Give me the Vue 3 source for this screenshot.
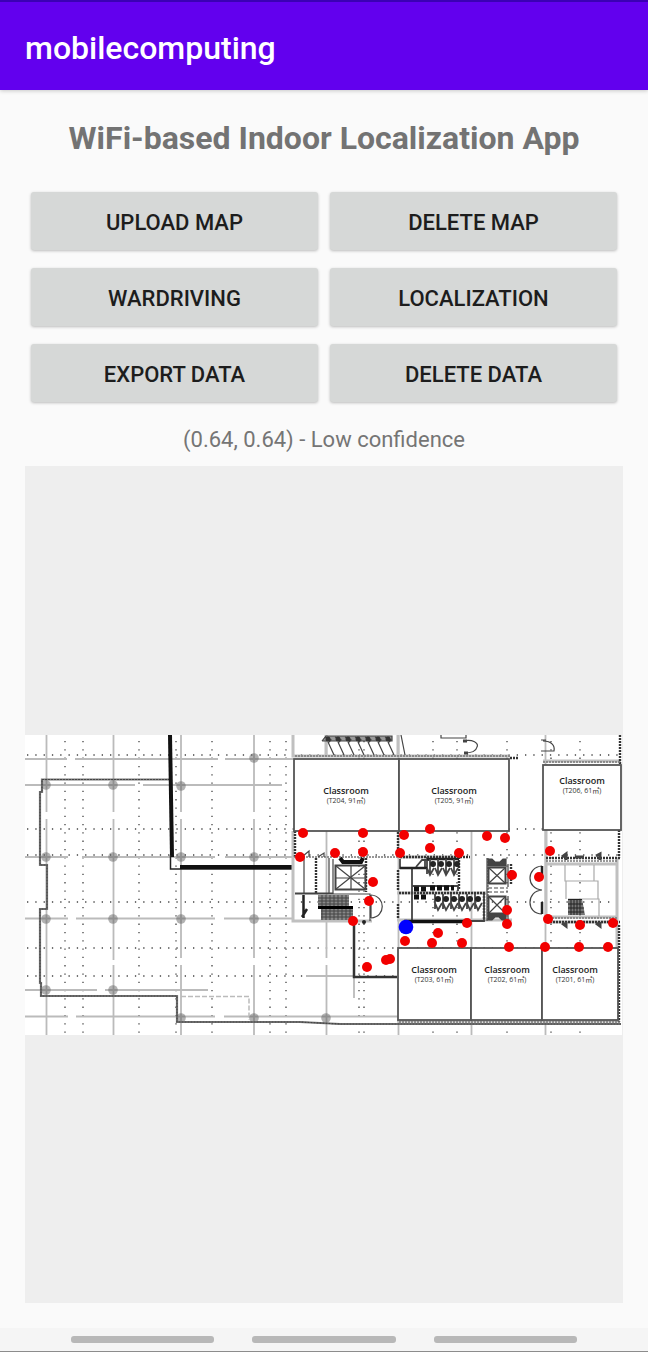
<script setup>
const actions = [
  'Upload map', 'Delete map',
  'Wardriving', 'Localization',
  'Export data', 'Delete data',
]

const rooms = [
  { id: 'T204', area: 91, x: 294, y: 759, w: 105, h: 72, tx: 346, ty: 794 },
  { id: 'T205', area: 91, x: 399, y: 759, w: 110, h: 72, tx: 454, ty: 794 },
  { id: 'T206', area: 61, x: 543, y: 765, w: 78, h: 65, tx: 582, ty: 784 },
  { id: 'T203', area: 61, x: 398, y: 948, w: 73, h: 72, tx: 434, ty: 973 },
  { id: 'T202', area: 61, x: 471, y: 948, w: 71, h: 72, tx: 507, ty: 973 },
  { id: 'T201', area: 61, x: 542, y: 948, w: 76, h: 72, tx: 575, ty: 973 },
]

const samples = [
  [303, 833], [300, 857], [335, 853], [363, 833], [363, 852], [404, 835],
  [430, 829], [430, 848], [400, 853], [459, 853], [487, 836], [505, 838],
  [550, 851], [373, 882], [369, 901], [353, 921], [512, 875], [539, 877],
  [507, 910], [507, 924], [467, 923], [438, 933], [432, 943], [462, 943],
  [405, 941], [386, 960], [390, 959], [367, 967], [509, 947], [545, 947],
  [579, 947], [608, 947], [548, 919], [580, 925], [613, 923],
]

const columns = [
  [46, 785], [113, 785], [181, 786], [254, 758],
  [46, 857], [113, 857], [181, 857], [254, 857],
  [46, 919], [113, 919], [181, 919], [254, 919],
  [46, 990], [113, 990], [181, 1018], [254, 1018], [326, 1018],
]

const dottedX = [65, 83, 139, 176, 212, 270, 286, 359, 364, 433, 457, 507, 551, 580]
const dottedY = [755, 829, 855, 902, 948, 976]
const deskX = [325, 335, 345, 355, 365, 375, 385]
const upperStalls = [430, 438, 446, 454]
const lowerStalls = [438, 446, 454, 462, 470, 478]
</script>

<template>
  <div class="screen">
    <header class="app-bar"><span>mobilecomputing</span></header>
    <main>
      <h1>WiFi-based Indoor Localization App</h1>
      <div class="actions">
        <button v-for="a in actions" :key="a" type="button">{{ a }}</button>
      </div>
      <p class="status">(0.64, 0.64) - Low confidence</p>
      <div class="map">
        <svg viewBox="25 735 598 300" role="img" aria-label="Floor map">
          <rect x="25" y="735" width="597" height="300" fill="#fff" />

          <!-- survey grid -->
          <g class="dots">
            <path v-for="x in dottedX" :key="'x' + x" :d="`M${x} 741V1035`" />
            <path v-for="y in dottedY" :key="'y' + y" :d="`M27 ${y}H622`" />
          </g>
          <g class="axis">
            <path d="M46.500 735V812M46.500 819V1035M113.500 735V812M113.500 819V960M113.500 965V1035M181 735V812M181 819V958M181 965V1035M254 735V812M254 819V958M254 965V1035" />
            <path d="M25 759H67M75 759H218M225 759H293M25 785H135M143 785H282M25 857H68M82 857H215M225 857H294M25 918.500H68M76 918.500H215M224 918.500H294M25 990H97M105 990H208M25 1016.500H68M76 1016.500H215M224 1016.500H398" />
            <path d="M326.500 735V755M326.500 831V958M326.500 965V1035M398.500 735V948M398.500 1020V1035M471.500 831V948M471.500 1020V1035M545.500 735V1035M306 976H354M354 977V998" />
          </g>
          <g class="axis-soft">
            <path d="M181 996.500H249V1020" stroke-dasharray="5 2" />
          </g>
          <circle v-for="([x, y], i) in columns" :key="'c' + i" :cx="x" :cy="y" r="4.800" fill="#666" opacity=".5" />

          <!-- outer walls -->
          <g class="wall">
            <path d="M170 779.500H42V792H40V865H47V909H40V983H41V996H177V1022H300L340 1024H621" />
          </g>
          <g class="wall-grain">
            <path d="M170 779.500H42V792H40V865H47V909H40V983H41V996H177V1022H300L340 1024H621" />
          </g>
          <path d="M170 735L172 857" class="heavy" />
          <path d="M170.500 855V869H294" fill="none" stroke="#222" stroke-width="1.500" />
          <path d="M180 867H294" class="heavy" />
          <path d="M354 921V977H397" fill="none" stroke="#333" stroke-width="2.500" />

          <!-- wall bands -->
          <g class="band">
            <path d="M293 735V756H510M293 831V921H372M326 735V756M398 735V756M397 920H512M397 893H486M397 857H460M543 761H621M546 764V921M546 864H617M546 917H617M546 922H617M617 858V1020M397 1021H620" />
          </g>
          <g class="hatch">
            <path d="M295 831V857M316 858V893M366 858V892M398 832V856M398 870V890M398 904V918M400 857H470M459 857V889M399 893H485M484 893V921M511 864V884M546 858H620M620 735V764M619 830V858M619 925V1022M510 758H519M547 922H620" />
          </g>
          <g class="hatch fine">
            <path d="M295 756H510M543 762H621M294 857H400M546 861H618M546 918H618M488 858V921M399 1022H620" />
          </g>

          <!-- lecture seating above T204 -->
          <g class="line">
            <path d="M322 741L326 736H392V741H322" fill="#999" />
            <g v-for="x in deskX" :key="x">
              <path :d="`M${x} 737L${x + 6} 740L${x + 3} 743M${x + 3} 742L${x + 9} 755`" />
              <circle :cx="x + 3" cy="739" r="2.500" fill="#333" />
            </g>
            <path d="M401 735L405 755M441 735V738H466V735M463 741C473 739 479 743 477 747C476 752 470 753 464 753" />
            <path d="M463 741H467M464 753H468" stroke-width="3" />
            <path d="M541 740H546M541 751H554C555 746 552 741 543 741" />
          </g>

          <!-- west stair core -->
          <g class="line">
            <path d="M304 858V893M329 858V893M333 859V893H295M295 894H370V921M371 895V918" />
            <path d="M371 895C386 896 386 917 371 918" />
            <path d="M303.500 895V918M307 909L302 917" stroke-width="2.500" />
            <path d="M335.500 865.500H365.500V889.500H335.500Z" stroke-width="2" />
            <path d="M336 866L365 889M365 866L336 889M351 865V889M336 878H365" />
            <path d="M340 858L343 862H361L363 858" stroke-width="4" />
            <path d="M318 857L324 853V857M303 856L309 851V857" />
            <circle cx="364" cy="922" r="2" fill="#222" />
          </g>
          <path d="M318 895H349V907H353V920H321V908H318Z" fill="#888" />
          <path d="M318 898H349M318 901H349M318 904H349M321 911H353M321 914H353M321 917H353M322 895V920M326 895V920M330 895V920M334 895V920M338 895V920M342 895V920M346 895V920M350 908V920" stroke="#444" />
          <path d="M318 907.500H353" stroke="#000" stroke-width="3" />

          <!-- central washrooms -->
          <g class="line">
            <path d="M400 859V868H425V860M416 867L422 860H429M412 868V921H484V894M427 857V874M412 894V886H458V891" stroke-width="1.800" />
            <path d="M400 868H427M427 859H459" stroke="#222" stroke-width="2.500" />
            <path d="M404 921.500H464" stroke-width="3.500" stroke="#111" />
            <g v-for="x in upperStalls" :key="'u' + x">
              <path :d="`M${x} 859V873M${x - 3} 868L${x} 875L${x + 4} 868`" stroke-width="1.800" />
              <circle :cx="x + 3" cy="864" r="3" fill="#222" />
            </g>
            <g v-for="x in lowerStalls" :key="'l' + x">
              <path :d="`M${x - 3} 894V909M${x - 3} 903L${x} 910L${x + 4} 903`" stroke-width="1.800" />
              <circle :cx="x" cy="899" r="3" fill="#222" />
            </g>
          </g>
          <path d="M414 889H427M414 897H427M430 888H454" stroke="#111" stroke-width="5" stroke-dasharray="5 2" />

          <!-- elevators -->
          <g class="line">
            <path d="M488.500 867.500H505.500V883.500H488.500ZM488.500 896.500H505.500V913.500H488.500Z" stroke-width="2" />
            <path d="M489 868L505 883M505 868L489 883M489 897L505 913M505 897L489 913M487 858V921M508 864V887M508 896V921" />
            <path d="M488 859H492L495 862H500L503 859H506V866H488ZM488 920V914H506V920H502L499 917H495L492 920Z" fill="#444" />
            <path d="M488 888H508M488 892H508" stroke-dasharray="4 2" stroke="#888" />
          </g>

          <!-- east core -->
          <g class="line soft">
            <path d="M565 865V881H594V865M566 881V899M566 881H598V899M568 899H599V916" />
          </g>
          <g class="line">
            <path d="M542 866C526 867 526 889 542 890C526 891 526 914 542 914" />
            <path d="M542 866V877M542 902V914" stroke-width="2.500" />
            <path d="M562 857L566 854V860M575 857H584M596 856L600 854V860M562 923L566 926V922M596 923L600 926V922" stroke-width="3" />
          </g>
          <path d="M568 899H582L585 915H568Z" fill="#777" />
          <path d="M568 899.500H582M571 900V915M574 900V915M577 900V915M580 900V915M568 904H583M568 908H584M568 912H584" stroke="#222" />

          <!-- rooms -->
          <g v-for="r in rooms" :key="r.id">
            <rect :x="r.x" :y="r.y" :width="r.w" :height="r.h" fill="#fff" stroke="#555" stroke-width="1.800" />
            <text class="room" :x="r.tx" :y="r.ty">Classroom</text>
            <text class="area" :x="r.tx" :y="r.ty + 9">({{ r.id }}, {{ r.area }}㎡)</text>
          </g>

          <circle v-for="([x, y], i) in samples" :key="'s' + i" :cx="x" :cy="y" r="5" fill="#f20000" />
          <circle cx="406" cy="927" r="7.300" fill="#00f" />
        </svg>
      </div>
    </main>
    <nav aria-label="System navigation">
      <button type="button" aria-label="Recent apps"></button>
      <button type="button" aria-label="Home"></button>
      <button type="button" aria-label="Back"></button>
    </nav>
  </div>
</template>

<style>
body {
  background: #fafafa;
}
</style>

<style scoped>
.screen {
  box-sizing: border-box;
  min-height: 100vh;
  display: flex;
  flex-direction: column;
  background: #fafafa;
  font-family: Roboto, sans-serif;
}
.app-bar {
  box-sizing: border-box;
  height: 90px;
  padding: 4px 25px 0;
  display: flex;
  align-items: center;
  border-top: 2px solid #3b00b4;
  background: #6200ee;
  color: #fff;
  font-size: 32px;
  font-weight: 500;
  box-shadow: 0 1px 4px rgba(0, 0, 0, 0.2);
}
main {
  flex: 1;
  display: flex;
  flex-direction: column;
  padding: 28px 25px 25px;
}
h1 {
  margin: 0;
  color: #737373;
  font-size: 32px;
  line-height: 40px;
  font-weight: 700;
  text-align: center;
}
.actions {
  display: grid;
  grid-template-columns: 1fr 1fr;
  gap: 18px 12px;
  padding: 34px 6px 0;
}
.actions button {
  height: 58px;
  padding: 2px 0 0;
  border: 0;
  border-radius: 3px;
  background: #d6d8d7;
  color: #1d1d1d;
  font: 500 22px Roboto, sans-serif;
  text-transform: uppercase;
  box-shadow: 0 1px 3px rgba(0, 0, 0, 0.25);
}
.status {
  margin: 23px 0 11px;
  color: #757575;
  font-size: 22px;
  line-height: 30px;
  text-align: center;
}
.map {
  flex: 1;
  display: flex;
  align-items: center;
  background: #eee;
}
.map svg {
  display: block;
  width: 100%;
}
.dots path {
  fill: none;
  stroke: #444;
  stroke-width: 1.3;
  stroke-dasharray: 1.3 7;
}
.axis path {
  fill: none;
  stroke: #bbb;
  stroke-width: 1.8;
}
.axis-soft path {
  fill: none;
  stroke: #bbb;
  stroke-width: 1.5;
}
.wall path {
  fill: none;
  stroke: #777;
  stroke-width: 2.2;
}
.wall-grain path {
  fill: none;
  stroke: #444;
  stroke-width: 1.2;
  stroke-dasharray: 2 1;
}
.heavy {
  fill: none;
  stroke: #111;
  stroke-width: 4;
}
.band path {
  fill: none;
  stroke: #c0c0c0;
  stroke-width: 3;
}
.hatch path {
  fill: none;
  stroke: #333;
  stroke-width: 2.4;
  stroke-dasharray: 2 1;
}
.hatch.fine path {
  stroke: #777;
  stroke-width: 1.5;
}
.line path {
  fill: none;
  stroke: #444;
  stroke-width: 1.2;
}
.line path[stroke-width="1.800"] {
  stroke-width: 1.8;
}
.line path[stroke-width="2"] {
  stroke-width: 2;
}
.line path[stroke-width="2.500"] {
  stroke: #222;
  stroke-width: 2.5;
}
.line path[stroke-width="3"] {
  stroke-width: 3;
}
.line path[stroke-width="3.500"] {
  stroke: #111;
  stroke-width: 3.5;
}
.line path[stroke-width="4"] {
  stroke: #111;
  stroke-width: 4;
}
.line path[fill="#444"] {
  fill: #444;
}
.line path[fill="#999"] {
  fill: #999;
}
.line.soft path {
  stroke: #aaa;
}
.room {
  font: 600 9px "Open Sans", "Noto Sans", sans-serif;
  text-anchor: middle;
  fill: #222;
}
.area {
  font: 7px "Open Sans", "Noto Sans CJK JP", sans-serif;
  text-anchor: middle;
  fill: #333;
}
nav {
  box-sizing: border-box;
  height: 24px;
  padding: 8px 71px 0;
  display: grid;
  grid-template-columns: repeat(3, 1fr);
  gap: 38px;
  background: #f5f5f5;
  border-bottom: 1px solid #8c8c8c;
}
nav button {
  height: 7px;
  padding: 0;
  border: 0;
  border-radius: 3px;
  background: #b8b8b8;
}
</style>
